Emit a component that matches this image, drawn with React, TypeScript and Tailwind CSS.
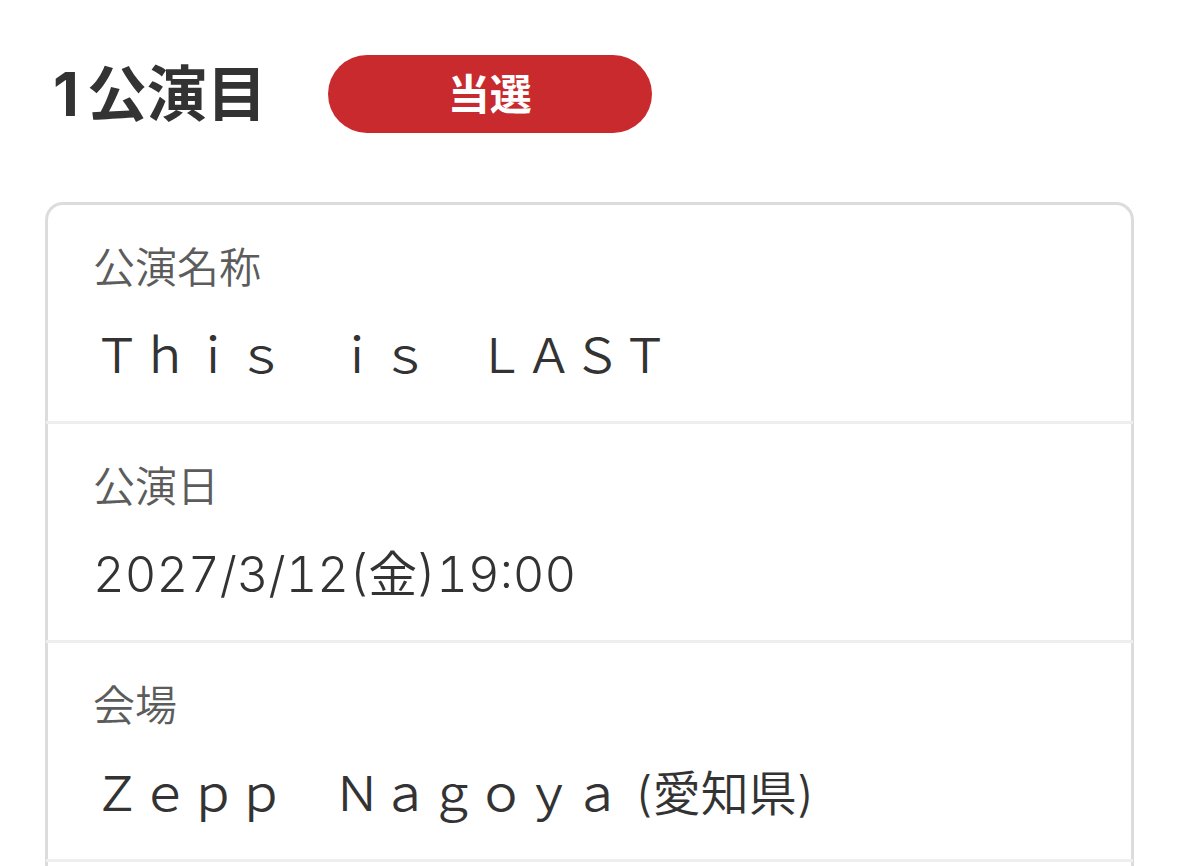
const rows = [
  { label: "公演名称", value: "Ｔｈｉｓ　ｉｓ　ＬＡＳＴ", size: "text-[48px]" },
  { label: "公演日", value: "2027/3/12(金)19:00", size: "text-[49px]" },
  { label: "会場", value: "Ｚｅｐｐ　Ｎａｇｏｙａ (愛知県)", size: "text-[48px]" },
];

export default function App() {
  return (
    <main className="h-screen overflow-hidden bg-white px-[45px] pt-[55px] font-['Inter','Noto_Sans_CJK_JP',sans-serif] text-[#333]">
      <header className="flex items-start gap-[61px]">
        <h1 className="flex gap-2 pl-2 text-[60px] leading-[78px] font-bold">
          <span>1</span>
          <span>公演目</span>
        </h1>
        <span className="flex h-[78px] w-[324px] items-center justify-center rounded-full bg-[#c82a2e] text-[42px] font-bold text-white">
          当選
        </span>
      </header>
      <dl className="mt-[69px] rounded-t-[18px] border-[3px] border-b-0 border-[#dcdcdc]">
        {rows.map((row) => (
          <div key={row.label} className="-mx-0.5 border-b-[3px] border-[#eeeeee] px-[47px] pt-8 pb-7">
            <dt className="text-[42px] leading-[62px] font-[350] text-[#5c5c5c]">{row.label}</dt>
            <dd className={`mt-5 leading-[74px] font-[350] tabular-nums ${row.size}`}>{row.value}</dd>
          </div>
        ))}
        <div className="h-24" />
      </dl>
    </main>
  );
}
